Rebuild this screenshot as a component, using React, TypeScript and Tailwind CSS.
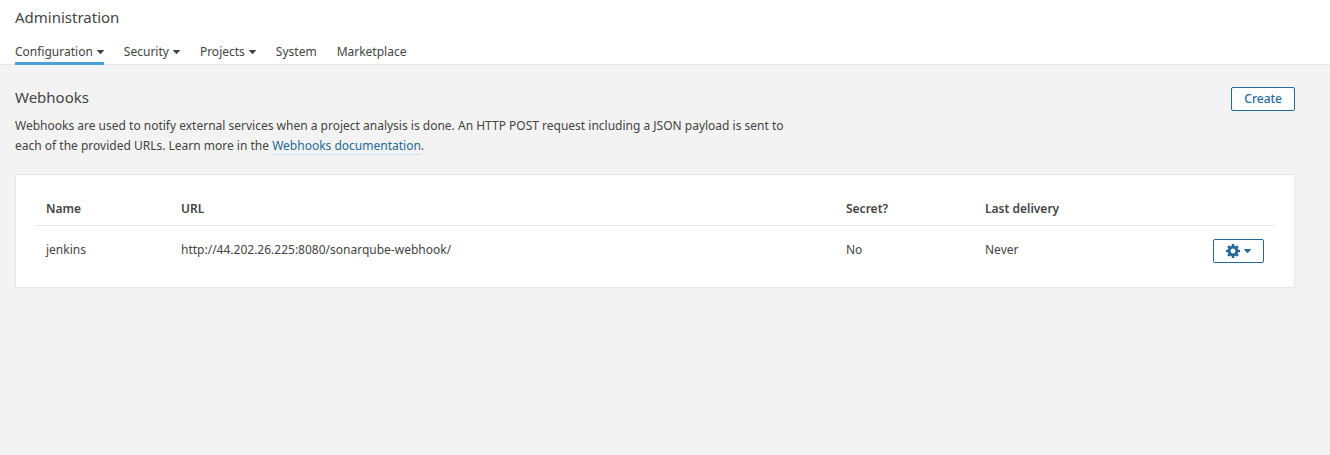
const Caret = () => (
  <svg width="7" height="4" viewBox="0 0 7 4" fill="currentColor" aria-hidden="true">
    <path d="M.4 0h6.200q.6.200.2.700L4 3.700q-.5.400-1 0L.2.700Q-.2.200.4 0z" />
  </svg>
);

const tabs = [
  { label: "Configuration", menu: true, active: true },
  { label: "Security", menu: true, active: false },
  { label: "Projects", menu: true, active: false },
  { label: "System", menu: false, active: false },
  { label: "Marketplace", menu: false, active: false },
];

export default function App() {
  return (
    <div className="min-h-screen bg-[#f3f3f3] font-['Noto_Sans',sans-serif] text-xs leading-5 text-[#444]">
      <header className="border-b border-[#e6e6e6] bg-white px-[15px] pt-[7px]">
        <h1 className="text-[15px] leading-5">Administration</h1>
        <nav className="-mb-px mt-[13px] flex gap-5">
          {tabs.map((tab) => (
            <a
              key={tab.label}
              href="#"
              className={`flex items-center gap-1 border-b-3 pt-0.5 ${tab.active ? "border-[#4b9fd5]" : "border-transparent"}`}
            >
              {tab.label}
              {tab.menu && <Caret />}
            </a>
          ))}
        </nav>
      </header>
      <main className="pt-5 pr-[35px] pl-[15px]">
        <div className="flex items-start justify-between">
          <div className="max-w-[790px]">
            <h2 className="text-[15px] leading-6">Webhooks</h2>
            <p className="mt-[7px]">
              Webhooks are used to notify external services when a project analysis is done. An HTTP POST request including a JSON payload is sent to each of the provided URLs. Learn more in the{" "}
              <a href="#" className="inline-block border-b border-[#cae3f2] leading-4 text-[#236a97]">Webhooks documentation</a>.
            </p>
          </div>
          <button className="mt-0.5 h-6 rounded-xs border border-[#236a97] bg-white px-3 text-xs font-medium text-[#236a97]">Create</button>
        </div>
        <section className="mt-[18px] border border-[#e6e6e6] bg-white px-5 pt-[15px] pb-[11px]">
          <table className="w-full table-fixed text-left">
            <thead>
              <tr className="border-b border-[#e6e6e6]">
                <th className="w-[135px] px-[10px] pt-[9px] pb-[6px] font-semibold">Name</th>
                <th className="px-[10px] pt-[9px] pb-[6px] font-semibold">URL</th>
                <th className="w-[139px] px-[10px] pt-[9px] pb-[6px] font-semibold">Secret?</th>
                <th className="w-[219px] px-[10px] pt-[9px] pb-[6px] font-semibold">Last delivery</th>
                <th className="w-[80px]" aria-label="Actions" />
              </tr>
            </thead>
            <tbody className="align-top">
              <tr>
                <td className="px-[10px] pt-[14px]">jenkins</td>
                <td className="px-[10px] pt-[14px]">http://44.202.26.225:8080/sonarqube-webhook/</td>
                <td className="px-[10px] pt-[14px]">No</td>
                <td className="px-[10px] pt-[14px]">Never</td>
                <td className="px-[10px] py-[13px]">
                  <button aria-label="Webhook actions" className="ml-auto flex h-6 items-center gap-1 rounded-xs border border-[#236a97] px-3 text-[#236a97]">
                    <svg width="14" height="14" viewBox="0 0 14 14" fill="none" stroke="currentColor" aria-hidden="true">
                      <circle cx="7" cy="7" r="3.900" strokeWidth="2.900" />
                      <path strokeWidth="2.600" d="M7 0v3M7 11v3M0 7h3M11 7h3M2.100 2.100l2 2M9.900 9.900l2 2M2.100 11.900l2-2M9.900 4.100l2-2" />
                    </svg>
                    <Caret />
                  </button>
                </td>
              </tr>
            </tbody>
          </table>
        </section>
      </main>
    </div>
  );
}
